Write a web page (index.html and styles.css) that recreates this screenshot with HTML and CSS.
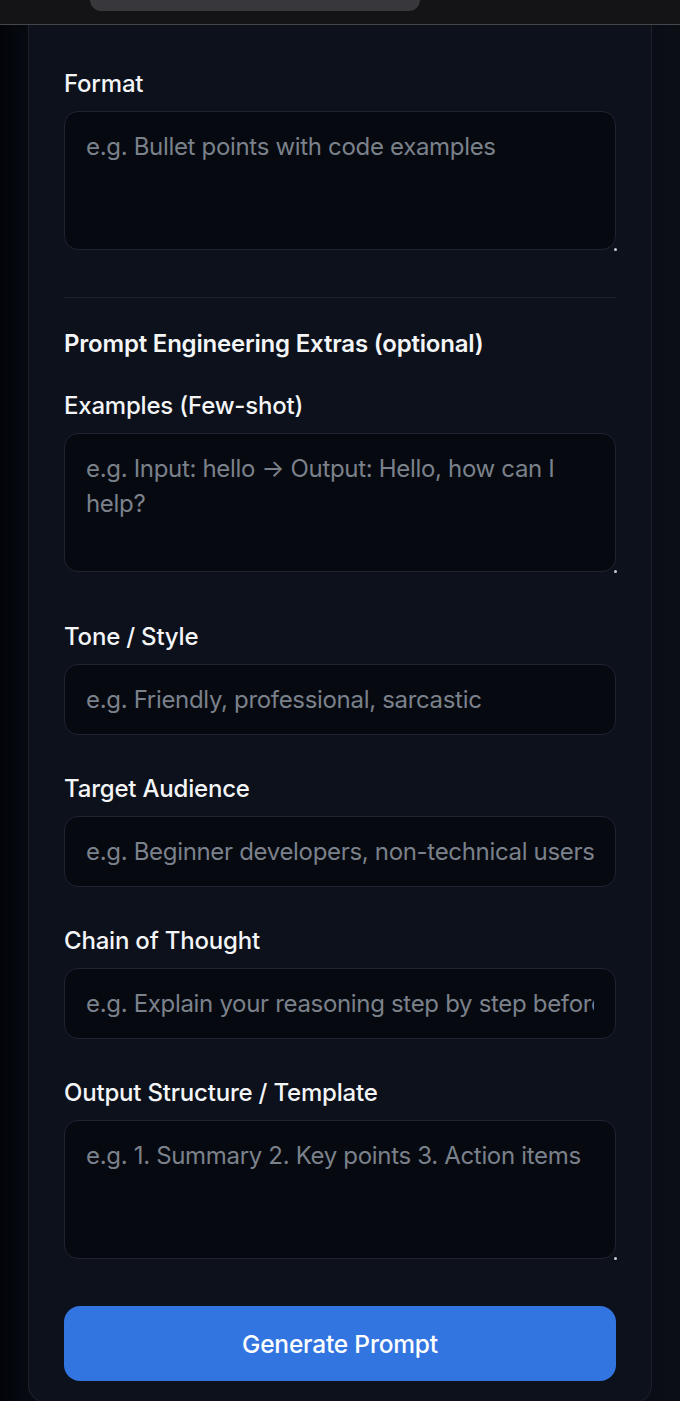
FILE: index.html
```html
<!DOCTYPE html>
<html lang="en">
<head>
<meta charset="utf-8">
<title>Prompt Builder</title>
<link rel="stylesheet" href="styles.css">
</head>
<body>
<div class="topbar"><div class="pill"></div></div>
<div class="page">
  <form class="card">
    <div class="field area-field">
      <label class="label">Format</label>
      <div class="area-wrap"><textarea class="control area" placeholder="e.g. Bullet points with code examples"></textarea></div>
    </div>
    <hr class="divider">
    <h3 class="heading">Prompt Engineering Extras (optional)</h3>
    <div class="field area-field tall-gap">
      <label class="label">Examples (Few-shot)</label>
      <div class="area-wrap"><textarea class="control area" placeholder="e.g. Input: hello → Output: Hello, how can I help?"></textarea></div>
    </div>
    <div class="field">
      <label class="label">Tone / Style</label>
      <input class="control input" type="text" placeholder="e.g. Friendly, professional, sarcastic">
    </div>
    <div class="field">
      <label class="label">Target Audience</label>
      <input class="control input" type="text" placeholder="e.g. Beginner developers, non-technical users">
    </div>
    <div class="field">
      <label class="label">Chain of Thought</label>
      <input class="control input" type="text" placeholder="e.g. Explain your reasoning step by step before answering">
    </div>
    <div class="field area-field">
      <label class="label">Output Structure / Template</label>
      <div class="area-wrap"><textarea class="control area" placeholder="e.g. 1. Summary 2. Key points 3. Action items"></textarea></div>
    </div>
    <button class="btn" type="button">Generate Prompt</button>
  </form>
</div>
</body>
</html>
```

FILE: styles.css
```css
* { box-sizing: border-box; }
html, body { margin: 0; padding: 0; }
body {
  background: #05070d;
  font-family: Inter, Roboto, "Noto Sans", sans-serif;
  height: 1401px;
  overflow: hidden;
}
.topbar {
  height: 25px;
  background: #141316;
  border-bottom: 1px solid #46464b;
  position: relative;
  overflow: hidden;
}
.pill {
  margin-left: 90px;
  width: 330px;
  height: 11px;
  background: #38373c;
  border-radius: 0 0 22px 22px;
}
.page {
  display: flex;
  background: linear-gradient(to right, #02040a 0, #070a11 28px, #0a0d15 652px, #0b0e15 100%);
  padding: 0 28px 0 28px;
  min-height: 1376px;
}
.card {
  width: 624px;
  background: #0c111b;
  border: 1px solid #1c212b;
  border-top: none;
  border-radius: 0 0 18px 18px;
  padding: 44px 35px 21px;
  display: flex;
  flex-direction: column;
}
.label, .heading {
  display: block;
  color: #f4f5f7;
  font-size: 24px;
  font-weight: 500;
  line-height: 30px;
  margin: 0 0 12px;
  letter-spacing: -0.2px;
}
.heading {
  font-weight: 600;
  margin: 0 0 32px;
}
.field { display: flex; flex-direction: column; margin-bottom: 39px; }
.area-field { margin-bottom: 47px; }
.tall-gap { margin-bottom: 50px; }
.control {
  width: 100%;
  background: #060910;
  border: 1px solid #1f2430;
  border-radius: 14px;
  color: #e5e7eb;
  font-family: inherit;
  font-size: 24px;
  line-height: 35px;
  padding: 17px 21px;
  outline: none;
  letter-spacing: -0.32px;
}
.control::placeholder { color: #7b818b; opacity: 1; }
.input { height: 71px; }
.area-wrap { position: relative; }
.area {
  display: block;
  height: 139px;
  resize: none;
  overflow: hidden;
}
.area-wrap::after {
  content: "";
  position: absolute;
  right: -1px;
  bottom: -1px;
  width: 3px;
  height: 3px;
  border-radius: 50%;
  background: #c9ccd2;
}
.divider {
  border: none;
  height: 1px;
  background: #1c212b;
  margin: 0 0 31px;
}
.btn {
  height: 75px;
  width: 100%;
  border: none;
  border-radius: 16px;
  background: #3375e0;
  color: #ffffff;
  font-family: inherit;
  font-size: 24.5px;
  font-weight: 500;
  letter-spacing: -0.2px;
}
```
